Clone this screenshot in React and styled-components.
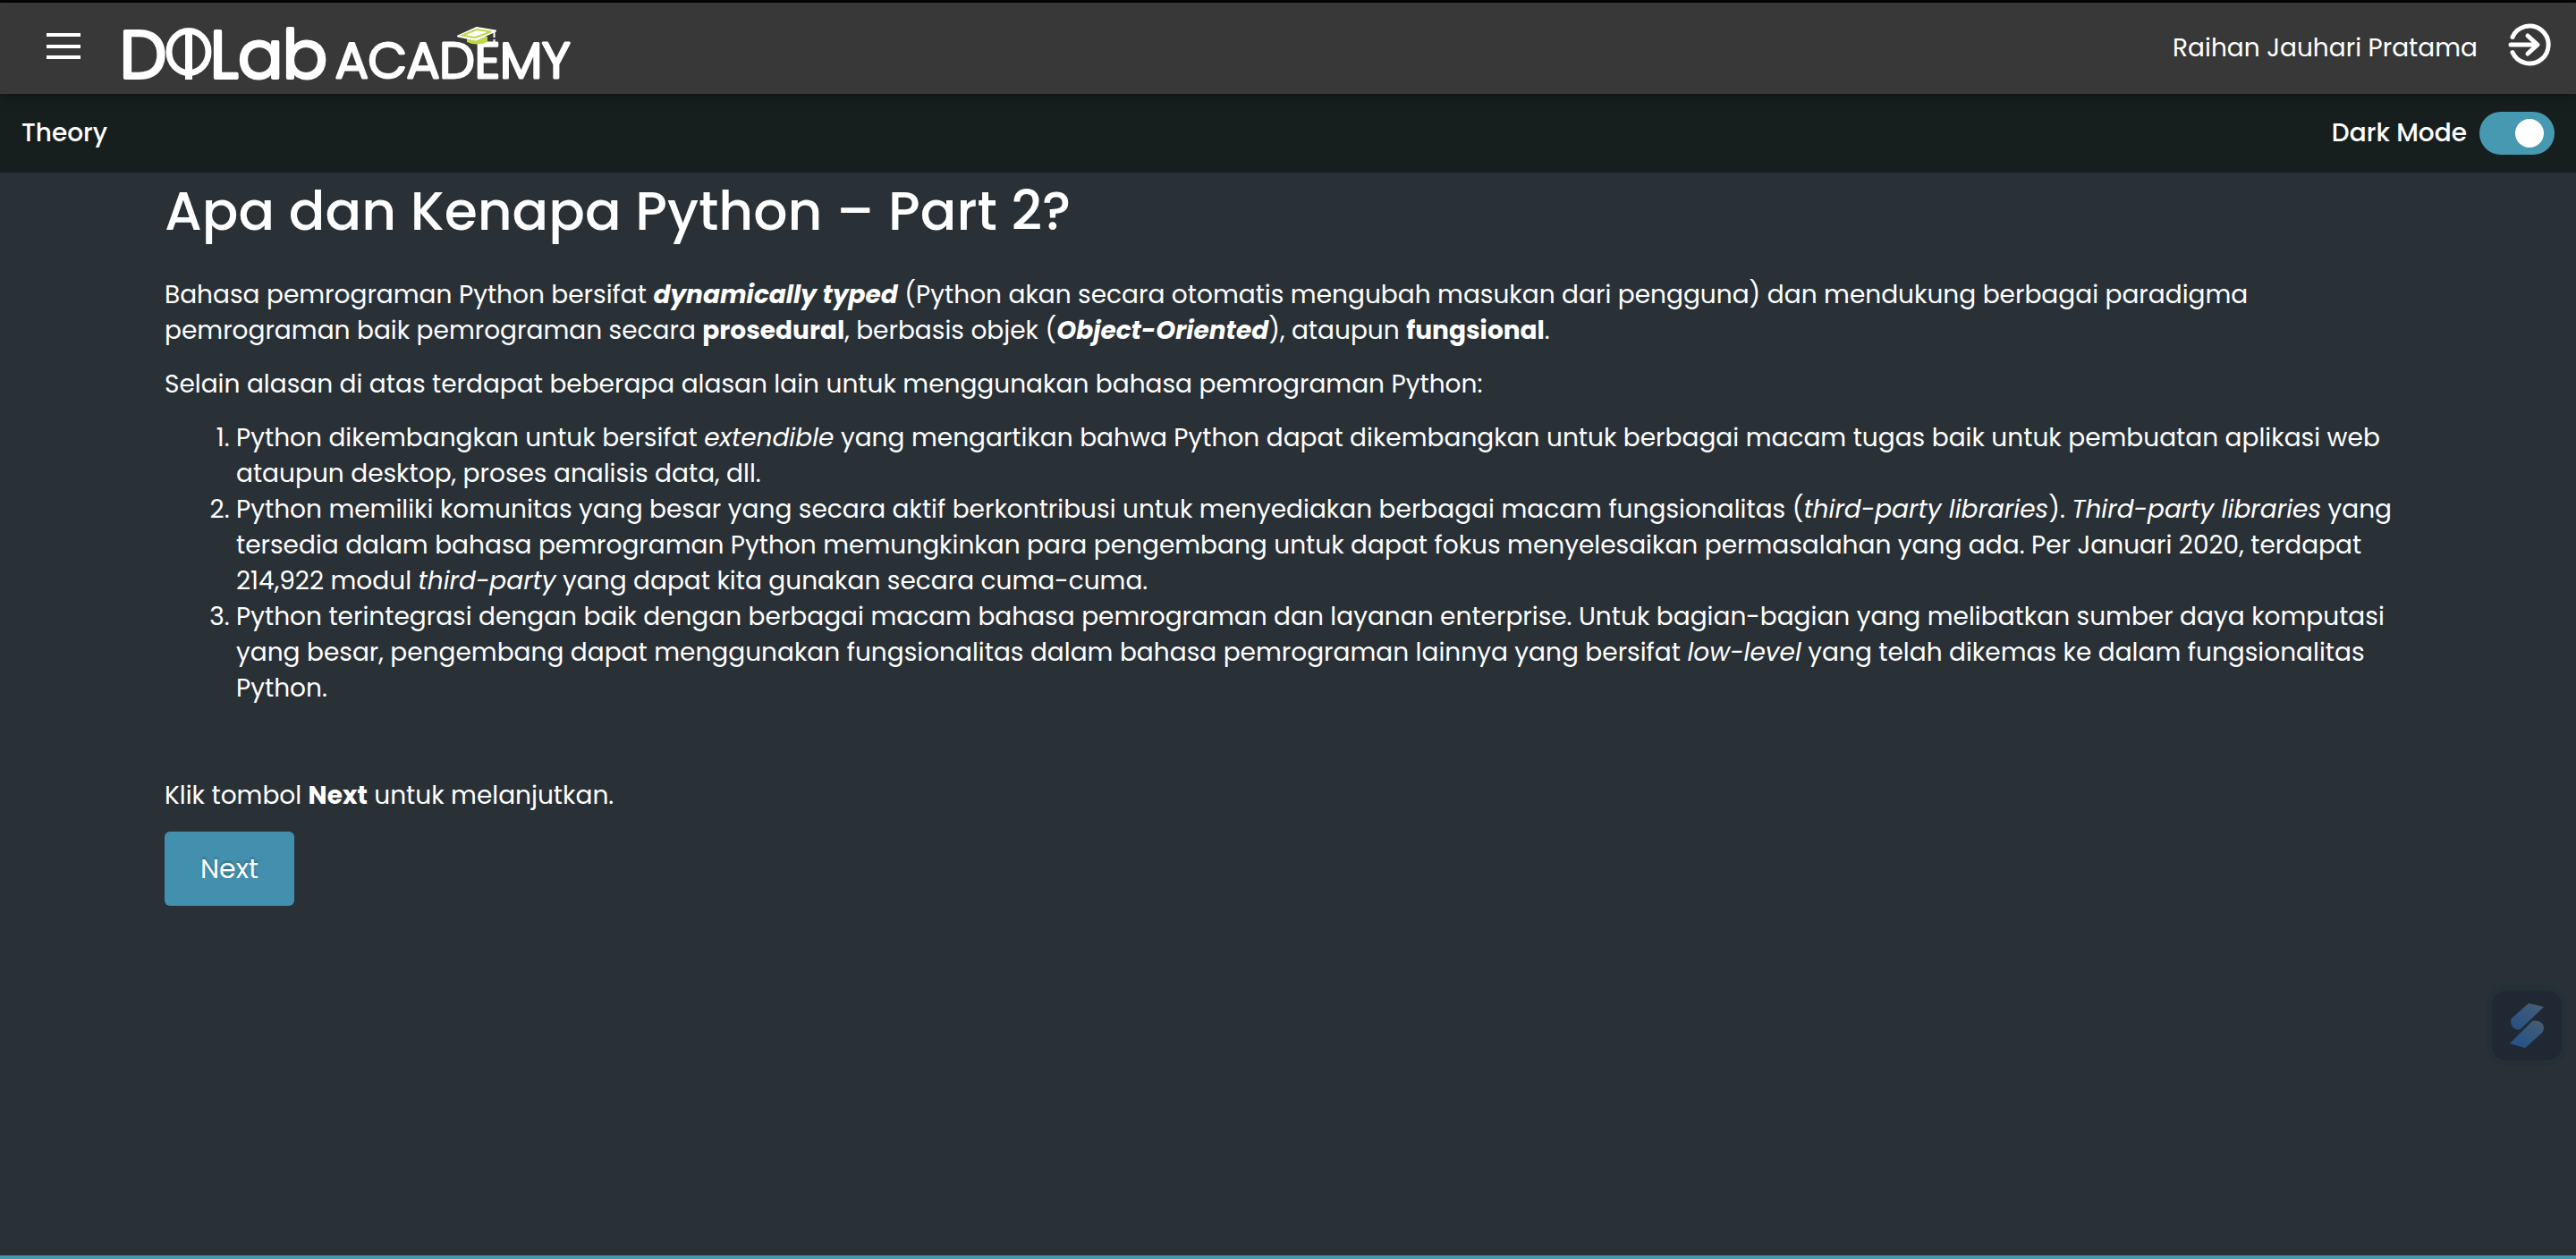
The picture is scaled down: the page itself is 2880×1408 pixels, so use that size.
import React, { useState } from "react";
import styled, { createGlobalStyle } from "styled-components";

const GlobalStyle = createGlobalStyle`
  *, *::before, *::after { box-sizing: border-box; }
  body {
    margin: 0;
    background: #293137;
    color: #fff;
    font-family: Poppins, Inter, "Open Sans", sans-serif;
    font-size: 28px;
    line-height: 40px;
  }
`;

const Page = styled.div`
  min-height: 100vh;
  display: flex;
  flex-direction: column;
  border-top: 3px solid #05050a;
  border-bottom: 4px solid #4799b1;
`;

const Header = styled.header`
  position: relative;
  display: flex;
  align-items: center;
  height: 102px;
  padding: 0 28px 0 52px;
  background: #383838;
  box-shadow: 0 2px 14px rgba(0, 0, 0, 0.4);
`;

const IconButton = styled.button`
  display: flex;
  padding: 0 0 ${(p) => p.$lift || 0}px;
  border: 0;
  background: none;
  color: inherit;
  cursor: pointer;
`;

const HomeLink = styled.a`
  display: flex;
  margin-left: 40px;
  color: inherit;
`;

const Account = styled.div`
  display: flex;
  align-items: center;
  gap: 34px;
  margin-left: auto;
`;

const LessonBar = styled.div`
  display: flex;
  align-items: center;
  justify-content: space-between;
  height: 88px;
  padding: 0 24px;
  background: #171f1e;
  font-weight: 500;
`;

const SwitchLabel = styled.label`
  display: flex;
  align-items: center;
  gap: 14px;
  cursor: pointer;
`;

const Switch = styled.input`
  appearance: none;
  display: flex;
  align-items: center;
  justify-content: ${(p) => (p.checked ? "flex-end" : "flex-start")};
  width: 84px;
  height: 48px;
  margin: 0;
  padding: 0 12px;
  border-radius: 24px;
  background: ${(p) => (p.checked ? "#4799b1" : "#8a8f92")};
  cursor: pointer;

  &::before {
    content: "";
    width: 32px;
    height: 32px;
    border-radius: 50%;
    background: #fff;
  }
`;

const Lesson = styled.main`
  flex: 1;
  padding: 9px 184px 0;
`;

const Title = styled.h1`
  margin: 0 0 40px;
  font-size: 60px;
  line-height: 68px;
  font-weight: 500;
`;

const Paragraph = styled.p`
  margin: 0 0 20px;
  min-height: 40px;
`;

const Reasons = styled.ol`
  margin: 0 0 20px;
  padding-left: 80px;
`;

const NextButton = styled.button`
  padding: 20px 40px;
  border: 0;
  border-radius: 6px;
  background: #438fae;
  color: #fff;
  font: inherit;
  font-size: 30px;
  line-height: 43px;
  text-shadow: 0 -2px 2px rgba(0, 0, 0, 0.25);
  cursor: pointer;
`;

const Widget = styled.button`
  position: fixed;
  right: 10px;
  bottom: 216px;
  display: grid;
  place-items: center;
  width: 90px;
  height: 90px;
  padding: 0;
  border: 6px solid #253036;
  border-radius: 22px;
  background: #202833;
  cursor: pointer;
`;

const WordMark = styled.text`
  fill: #fff;
  stroke: #fff;
  stroke-width: ${(p) => p.$stroke}px;
  stroke-linejoin: round;
  font-family: Poppins, Inter, sans-serif;
  font-weight: 300;
  font-size: ${(p) => p.$size}px;
`;

function MenuIcon() {
  return (
    <svg width="38" height="30" viewBox="0 0 38 30" fill="currentColor" aria-hidden="true">
      <rect width="38" height="4" />
      <rect y="13" width="38" height="4" />
      <rect y="25" width="38" height="4" />
    </svg>
  );
}

function Logo() {
  return (
    <svg width="540" height="100" viewBox="0 0 540 100" overflow="visible" role="img" aria-label="DQLab Academy">
      <WordMark x="4" y="83" $size={74} $stroke={4}>D</WordMark>
      <ellipse cx="81" cy="54" rx="22" ry="23.5" fill="none" stroke="#fff" strokeWidth="7" />
      <path d="M81 30V85" stroke="#fff" strokeWidth="8" />
      <WordMark x="105" y="83" $size={74} $stroke={4}>Lab</WordMark>
      <WordMark x="245" y="83" $size={56} $stroke={3}>ACADEMY</WordMark>
      <path d="M392 37v6q11 5 23 0v-6z" fill="#c1d64b" />
      <path d="M382 36.500L403 27L424 30.500L402 40.500z" fill="#fff" stroke="#fff" strokeWidth="2" strokeLinejoin="round" />
      <path d="M387 35.500L403 29L419 31.500L401 38z" fill="#fff" stroke="#c1d64b" strokeWidth="2" />
      <path d="M422.500 31v7m0 2v3" stroke="#fff" strokeWidth="2" />
    </svg>
  );
}

function ExitIcon() {
  return (
    <svg width="48" height="48" viewBox="0 0 48 48" fill="none" stroke="currentColor" strokeWidth="5" strokeLinecap="round" strokeLinejoin="round" aria-hidden="true">
      <path d="M5 15.5A21 21 0 1 1 5 32.500" />
      <path d="M3 24H32M22 14l11 10-11 10" />
    </svg>
  );
}

function WidgetIcon() {
  return (
    <svg width="40" height="52" viewBox="0 0 40 52" aria-hidden="true">
      <defs>
        <linearGradient id="upper" x1="1" y1="0" x2="0" y2="1">
          <stop stopColor="#466078" />
          <stop offset="1" stopColor="#254f83" />
        </linearGradient>
        <linearGradient id="lower" x1="1" y1="0" x2="0.300" y2="1">
          <stop stopColor="#485d71" />
          <stop offset="1" stopColor="#24528a" />
        </linearGradient>
      </defs>
      <path d="M22 1l17 4-26 25c-5 2-11-2-11-9 0-2 1-3 2-4z" fill="url(#upper)" />
      <path d="M1 46l25-25c6-2 13 2 13 7 0 3-1 5-2 6L18 51z" fill="url(#lower)" />
    </svg>
  );
}

export default function App() {
  const [dark, setDark] = useState(true);
  return (
    <Page>
      <GlobalStyle />
      <Header>
        <IconButton type="button" aria-label="Menu" $lift={4}><MenuIcon /></IconButton>
        <HomeLink href="#" aria-label="DQLab Academy"><Logo /></HomeLink>
        <Account>
          <span>Raihan Jauhari Pratama</span>
          <IconButton type="button" aria-label="Logout" $lift={8}><ExitIcon /></IconButton>
        </Account>
      </Header>
      <LessonBar>
        <span>Theory</span>
        <SwitchLabel>
          Dark Mode
          <Switch type="checkbox" role="switch" checked={dark} onChange={() => setDark(!dark)} />
        </SwitchLabel>
      </LessonBar>
      <Lesson>
        <Title>Apa dan Kenapa Python – Part 2?</Title>
        <Paragraph>
          Bahasa pemrograman Python bersifat <strong><em>dynamically typed</em></strong> (Python akan secara otomatis mengubah masukan dari pengguna) dan mendukung berbagai paradigma pemrograman baik pemrograman secara <strong>prosedural</strong>, berbasis objek (<strong><em>Object-Oriented</em></strong>), ataupun <strong>fungsional</strong>.
        </Paragraph>
        <Paragraph>Selain alasan di atas terdapat beberapa alasan lain untuk menggunakan bahasa pemrograman Python:</Paragraph>
        <Reasons>
          <li>
            Python dikembangkan untuk bersifat <em>extendible</em> yang mengartikan bahwa Python dapat dikembangkan untuk berbagai macam tugas baik untuk pembuatan aplikasi web ataupun desktop, proses analisis data, dll.
          </li>
          <li>
            Python memiliki komunitas yang besar yang secara aktif berkontribusi untuk menyediakan berbagai macam fungsionalitas (<em>third-party libraries</em>). <em>Third-party libraries</em> yang tersedia dalam bahasa pemrograman Python memungkinkan para pengembang untuk dapat fokus menyelesaikan permasalahan yang ada. Per Januari 2020, terdapat 214,922 modul <em>third-party</em> yang dapat kita gunakan secara cuma-cuma.
          </li>
          <li>
            Python terintegrasi dengan baik dengan berbagai macam bahasa pemrograman dan layanan enterprise. Untuk bagian-bagian yang melibatkan sumber daya komputasi yang besar, pengembang dapat menggunakan fungsionalitas dalam bahasa pemrograman lainnya yang bersifat <em>low-level</em> yang telah dikemas ke dalam fungsionalitas Python.
          </li>
        </Reasons>
        <Paragraph />
        <Paragraph>Klik tombol <strong>Next</strong> untuk melanjutkan.</Paragraph>
        <NextButton type="button">Next</NextButton>
      </Lesson>
      <Widget type="button" aria-label="Assistant"><WidgetIcon /></Widget>
    </Page>
  );
}
